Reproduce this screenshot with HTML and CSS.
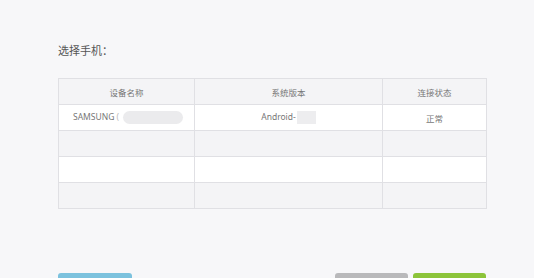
FILE: index.html
```html
<!DOCTYPE html>
<html lang="zh">
<head>
<meta charset="utf-8">
<link rel="stylesheet" href="styles.css">
</head>
<body>
<div class="page">
  <div class="title">选择手机：</div>
  <table class="devices">
    <colgroup>
      <col class="c1"><col class="c2"><col class="c3">
    </colgroup>
    <thead>
      <tr><th>设备名称</th><th>系统版本</th><th>连接状态</th></tr>
    </thead>
    <tbody>
      <tr class="white">
        <td class="left">SAMSUNG <span class="paren">(</span><span class="blur-pill"></span></td>
        <td>Android-<span class="blur-box"></span></td>
        <td>正常</td>
      </tr>
      <tr class="gray"><td></td><td></td><td></td></tr>
      <tr class="white"><td></td><td></td><td></td></tr>
      <tr class="gray"><td></td><td></td><td></td></tr>
    </tbody>
  </table>
  <div class="actions">
    <div class="btn blue"></div>
    <div class="spacer"></div>
    <div class="btn grey"></div>
    <div class="btn green"></div>
  </div>
</div>
</body>
</html>
```
FILE: styles.css
```css
html, body {
  margin: 0;
  padding: 0;
  background: #f7f7f9;
  height: 278px;
  overflow: hidden;
}
.page {
  padding: 43px 48px 0 58px;
  font-family: "Noto Sans", "Noto Sans CJK SC", sans-serif;
  color: #555;
  height: 235px;
  overflow: hidden;
}
.title {
  font-size: 11px;
  line-height: 16px;
  height: 16px;
  color: #555;
}
.devices {
  margin-top: 19px;
  width: 428px;
  border-collapse: collapse;
  table-layout: fixed;
  border: 1px solid #e0e0e4;
}
.c1 { width: 136px; }
.c2 { width: 188px; }
.c3 { width: 104px; }
.devices th, .devices td {
  border: 1px solid #e0e0e4;
  height: 25px;
  padding: 0;
  font-size: 8.5px;
  font-weight: normal;
  text-align: center;
  color: #777;
  vertical-align: middle;
  white-space: nowrap;
}
.devices thead tr { background: #f4f4f6; }
.devices tr.white { background: #ffffff; }
.devices tr.gray { background: #f4f4f6; }
.devices td.left {
  text-align: left;
  padding-left: 14px;
}
.paren { color: #bbb; }
.blur-pill {
  display: inline-block;
  vertical-align: middle;
  width: 60px;
  height: 13px;
  margin-left: 4px;
  border-radius: 7px;
  background: #ebebed;
}
.blur-box {
  display: inline-block;
  vertical-align: middle;
  width: 19px;
  height: 13px;
  margin-left: 1px;
  background: #ededef;
}
.actions {
  display: flex;
  margin-top: 64px;
  width: 428px;
}
.spacer { flex: 1; }
.btn {
  height: 28px;
  border-radius: 3px;
}
.blue { width: 74px; background: #7cc2de; }
.grey { width: 73px; background: #b9b9bb; margin-right: 5px; }
.green { width: 73px; background: #8cc43a; }
```
